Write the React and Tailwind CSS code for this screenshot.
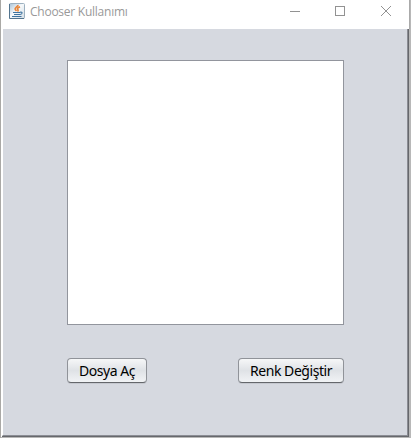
function JavaIcon() {
  return (
    <svg width="16" height="16" viewBox="0 0 16 16" className="shrink-0">
      <defs>
        <linearGradient id="tile" x1="0" y1="0" x2="1" y2="1">
          <stop offset="0" stopColor="#a9c2d6" />
          <stop offset="0.45" stopColor="#f6f9fb" />
          <stop offset="1" stopColor="#d3dce4" />
        </linearGradient>
      </defs>
      <rect x="0.5" y="0.5" width="15" height="15" rx="1" fill="url(#tile)" stroke="#9db1c0" />
      <path d="M0.5 1v14.500h14.500" fill="none" stroke="#54758f" />
      <path d="M9 1.800C9.400 3.600 5 4.600 6.200 6.600l1.300 1.500M11 3.800c-2 .9-3.300 1.800-2.200 2.800.6.600.4 1.200-.4 1.600" fill="none" stroke="#e8863a" strokeWidth="1.600" />
      <path d="M4 9.500h7M5 11.500h6M3 13.500h9.500M11 9.200c3-.6 2.600 2 0 2.300" fill="none" stroke="#3f74a0" strokeWidth="1.100" />
    </svg>
  );
}

function TitleBar() {
  return (
    <header className="flex h-[29px] w-[409px] items-start border-r border-[#aaaaaa] bg-white pl-[8px] pt-[3px]">
      <JavaIcon />
      <h1 className="ml-[5px] mt-[1px] w-[110px] whitespace-nowrap font-['Open_Sans',sans-serif] text-[12px] leading-4 tracking-[-0.25px] text-[#999999]">
        Chooser Kullanımı
      </h1>
      <svg width="110" height="16" viewBox="0 0 110 16" className="ml-[149px] shrink-0" fill="none" stroke="#929292" shapeRendering="crispEdges">
        <path d="M1 8.500h10" />
        <rect x="46.500" y="3.500" width="9" height="9" />
        <path d="M92 3l10 10M102 3l-10 10" shapeRendering="auto" />
      </svg>
    </header>
  );
}

function Button({ className, children }) {
  return (
    <button
      type="button"
      className={`h-[25px] whitespace-nowrap rounded-[4px] border border-[#909399] border-b-[#64676b] bg-linear-to-b from-[#f6f7f8] via-[#dfe2e6] to-[#f1f3f5] text-center font-['Noto_Sans',sans-serif] text-[14px] leading-[23px] text-black shadow-[0_1px_0_#c5c8cf] ${className}`}
    >
      {children}
    </button>
  );
}

export default function App() {
  return (
    <div className="h-[438px] w-[411px] overflow-hidden border-l border-[#aaa9a6] bg-[#b8b8b8]">
      <div className="h-[437px] w-[408px] bg-white">
        <TitleBar />
        <main className="ml-px flex h-[408px] w-[407px] flex-col border-b border-r border-[#66686c]">
          <div className="h-[407px] border-b border-l border-r border-b-[#8b8d94] border-l-white border-r-[#8b8d94] bg-[#d6d9e0] pl-[64px] pt-[31px]">
            <div className="h-[265px] w-[277px] border border-[#92959d] bg-white" />
            <div className="mt-[33px] flex w-[277px] justify-between">
              <Button className="w-[80px] tracking-[-0.45px]">Dosya Aç</Button>
              <Button className="w-[106px] tracking-[-0.45px]">Renk Değiştir</Button>
            </div>
          </div>
        </main>
      </div>
    </div>
  );
}
